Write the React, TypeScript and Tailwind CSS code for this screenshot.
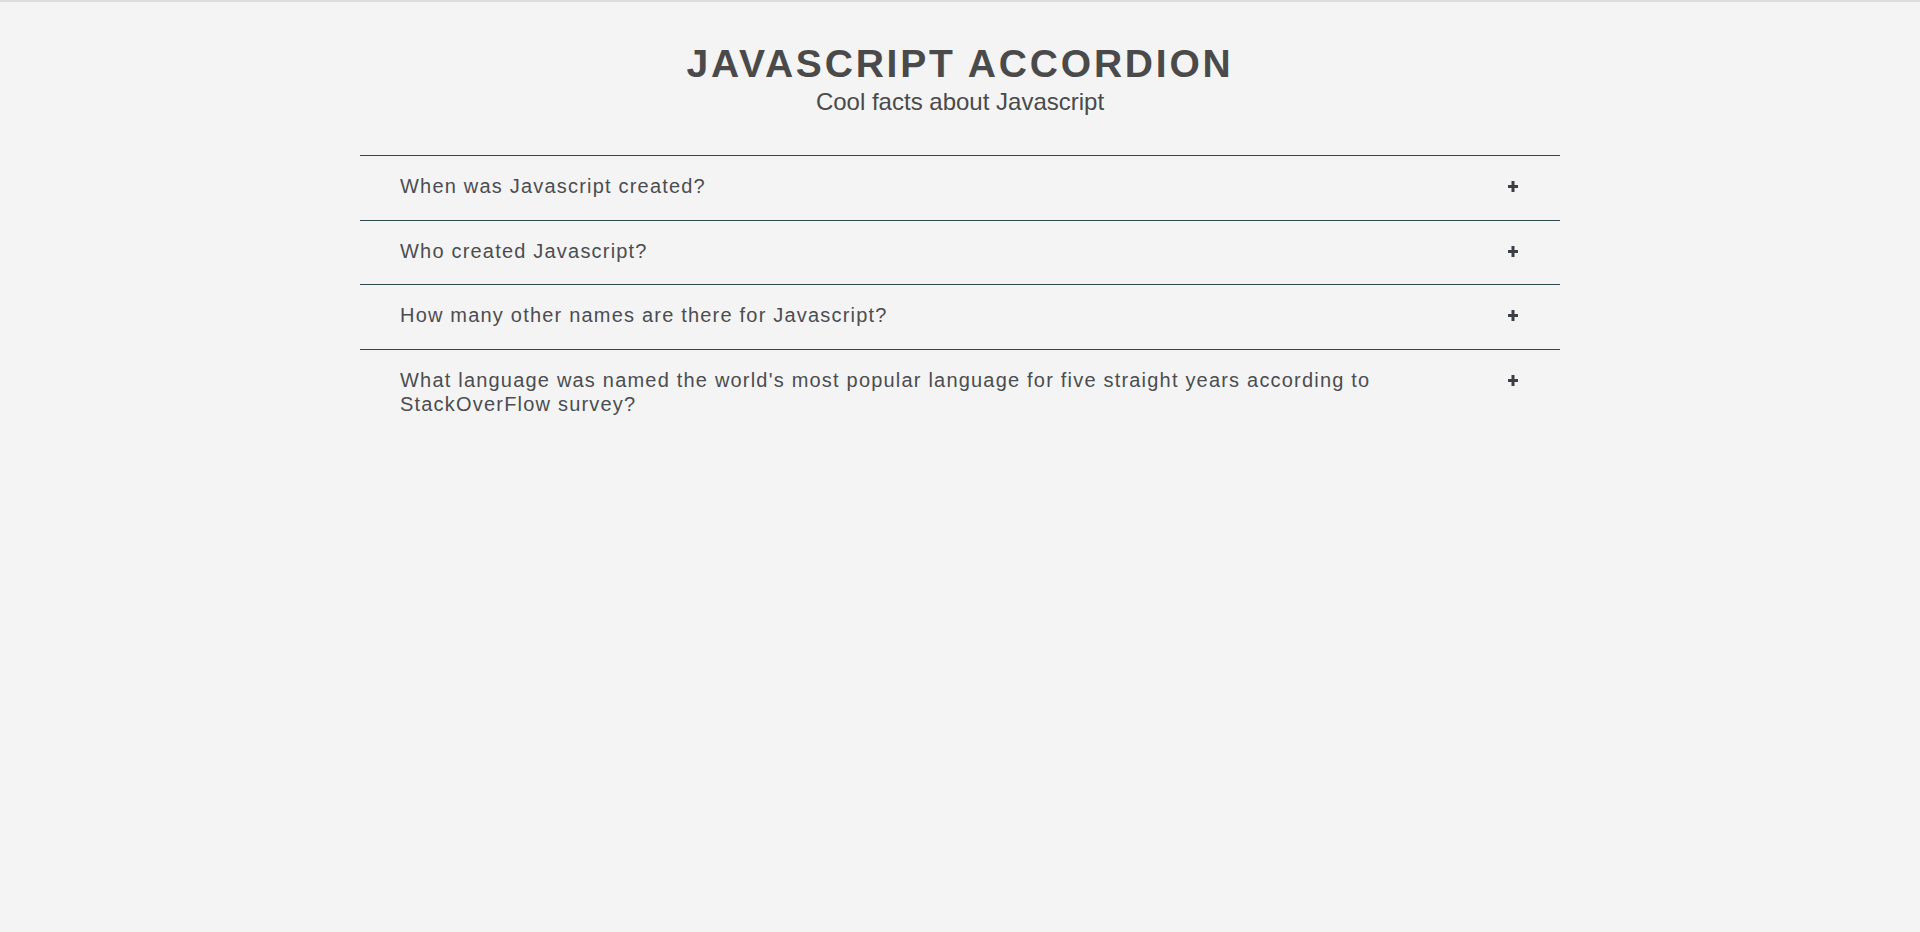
import { useState } from 'react';

const FAQS = [
  { q: 'When was Javascript created?', a: 'Javascript was created in 1995.' },
  { q: 'Who created Javascript?', a: 'Brendan Eich, while working at Netscape.' },
  { q: 'How many other names are there for Javascript?', a: 'Mocha, LiveScript and ECMAScript.' },
  {
    q: "What language was named the world's most popular language for five straight years according to StackOverFlow survey?",
    a: 'Javascript.',
  },
];

function PlusIcon() {
  return (
    <svg width="10" height="11" viewBox="0 0 10 11" className="shrink-0 mt-[7px]" aria-hidden>
      <rect x="0" y="4" width="10" height="3" fill="#3b3f44" />
      <rect x="3.5" y="0" width="3" height="11" fill="#3b3f44" />
    </svg>
  );
}

export default function App() {
  const [open, setOpen] = useState<number | null>(null);

  return (
    <div className="min-h-screen bg-[#f4f4f4] border-t-2 border-[#dcdce0] font-['Liberation_Sans',Arial,sans-serif] text-[#4a4a4a]">
      <header className="pt-[39px] text-center">
        <h1 className="text-[39px] leading-[45px] font-bold tracking-[2.8px] text-[#4a4a4a]">
          JAVASCRIPT ACCORDION
        </h1>
        <p className="text-[24px] leading-[28px] mt-[2px] text-[#4a4a4a]">Cool facts about Javascript</p>
      </header>

      <div className="w-[1200px] mx-auto mt-[39px]">
        {FAQS.map((f, i) => (
          <div key={f.q} className="border-t border-[#2f4a4f]">
            <button
              type="button"
              onClick={() => setOpen(open === i ? null : i)}
              className="w-full flex items-start text-left pl-[40px] pr-[42px] pt-[18px] pb-[21.5px]"
            >
              <span className="flex-1 pr-[120px] text-[20px] leading-[24px] tracking-[0.06em] text-[#4b4d50]">
                {f.q}
              </span>
              <PlusIcon />
            </button>
            {open === i && (
              <div className="pl-[40px] pr-[42px] pb-[20px] text-[18px] text-[#4b4d50]">{f.a}</div>
            )}
          </div>
        ))}
      </div>
    </div>
  );
}
